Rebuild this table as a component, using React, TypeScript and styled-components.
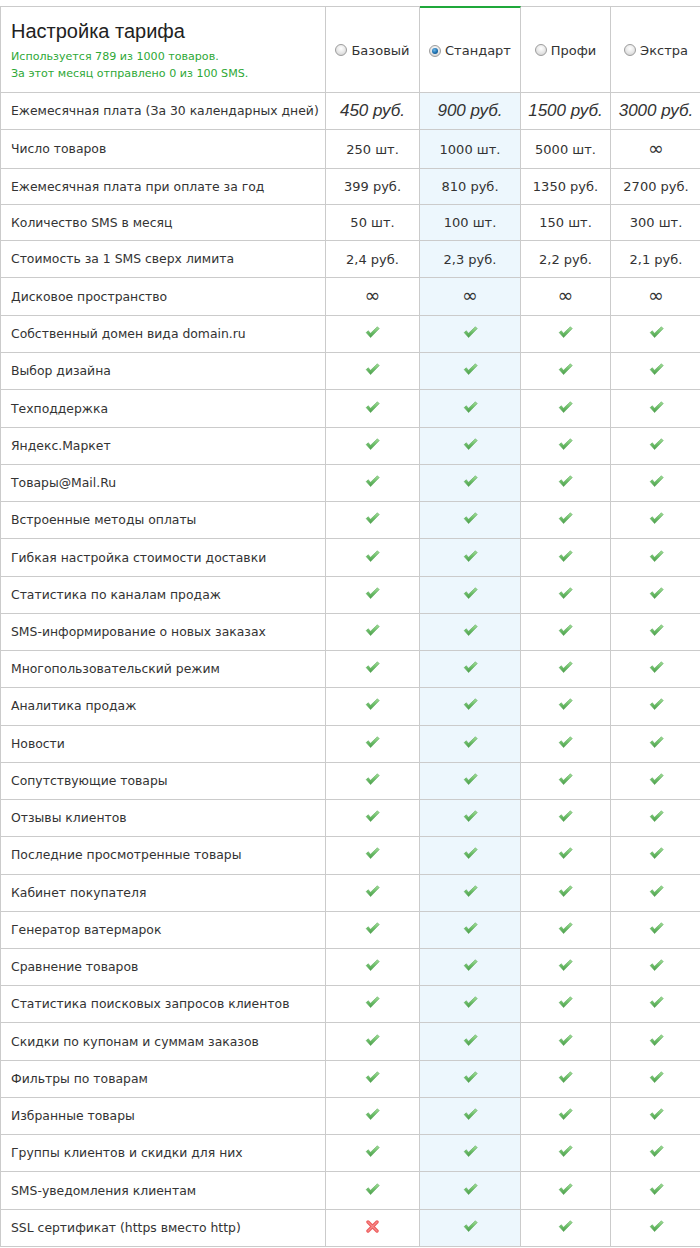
import React from "react";
import styled, { createGlobalStyle } from "styled-components";

const Global = createGlobalStyle`
  html, body { margin: 0; padding: 0; background: #fff; overflow: hidden; }
  body { font-family: "DejaVu Sans", Verdana, sans-serif; color: #333; }
`;

const COLS = "325px 94px 101px 90px 91px";

const Table = styled.div`
  margin-top: 6px;
  width: 701px;
  border-top: 1px solid #cbcbcb;
  border-left: 1px solid #cbcbcb;
  box-sizing: border-box;
`;

const Row = styled.div<{ $h: number }>`
  display: grid;
  grid-template-columns: ${COLS};
  height: ${(p) => p.$h}px;
`;

const Cell = styled.div<{ $hl?: boolean; $top?: boolean }>`
  box-sizing: border-box;
  border-right: 1px solid #cbcbcb;
  border-bottom: 1px solid #cbcbcb;
  background: ${(p) => (p.$hl ? "#edf7fd" : "#fff")};
  display: flex;
  align-items: center;
  justify-content: center;
  font-size: 13px;
  color: #333;
  ${(p) => (p.$top ? "border-top: 2px solid #1fa83a; margin-top: -1px;" : "")}
`;

const LabelCell = styled(Cell)`
  justify-content: flex-start;
  padding-left: 10px;
  padding-bottom: 1px;
  font-size: 12.4px;
  white-space: nowrap;
`;

const TitleCell = styled(Cell)`
  flex-direction: column;
  align-items: flex-start;
  justify-content: flex-start;
  padding: 12px 10px 0;
`;

const Title = styled.div`
  font-family: "Liberation Sans", Arial, sans-serif;
  font-size: 20px;
  color: #222;
  line-height: 24px;
`;

const Usage = styled.div`
  margin-top: 5px;
  font-size: 11.1px;
  line-height: 17px;
  color: #2ea836;
`;

const PlanLabel = styled.label`
  display: flex;
  align-items: center;
  gap: 4px;
  font-size: 13px;
  color: #333;
  margin-top: 1px;
`;

const Radio = styled.span<{ $on?: boolean }>`
  width: 12px;
  height: 12px;
  border-radius: 50%;
  box-sizing: border-box;
  border: 1px solid #9d9d9d;
  background: radial-gradient(circle at 50% 35%, #ffffff 0%, #e6e6e6 55%, #c9c9c9 100%);
  display: inline-flex;
  align-items: center;
  justify-content: center;
  &::after {
    content: "";
    display: ${(p) => (p.$on ? "block" : "none")};
    width: 6px;
    height: 6px;
    border-radius: 50%;
    background: radial-gradient(circle at 40% 35%, #6fb8e8 0%, #1c6fae 55%, #0d3f6e 100%);
  }
`;

const Price = styled.span`
  font-family: "Liberation Sans", Arial, sans-serif;
  font-style: italic;
  font-size: 17px;
  color: #333;
`;

const Inf = styled.span`
  font-size: 19px;
  line-height: 1;
  color: #333;
  margin-top: -2px;
`;

const IconWrap = styled.span`
  display: inline-flex;
  margin-top: -3px;
`;

const Check = () => (
  <IconWrap>
    <svg width="15" height="13" viewBox="0 0 15 13">
      <defs>
        <linearGradient id="cg" x1="0" y1="0" x2="0" y2="1">
          <stop offset="0" stopColor="#a7e09c" />
          <stop offset="0.5" stopColor="#6cbf68" />
          <stop offset="1" stopColor="#4c9c4c" />
        </linearGradient>
      </defs>
      <path
        d="M1.2 6.6 L3.2 4.8 L5.6 7.2 L12.4 0.8 L14.2 2.6 L5.6 11.6 Z"
        fill="url(#cg)"
        stroke="#5aa95a"
        strokeWidth="0.6"
        strokeLinejoin="round"
      />
    </svg>
  </IconWrap>
);

const Cross = () => (
  <IconWrap>
    <svg width="13" height="13" viewBox="0 0 13 13">
      <path
        d="M2 2 L11 11 M11 2 L2 11"
        stroke="#ec5b5b"
        strokeWidth="3.4"
        strokeLinecap="round"
      />
      <path d="M2 2 L11 11 M11 2 L2 11" stroke="#f88a8a" strokeWidth="1.2" strokeLinecap="round" />
    </svg>
  </IconWrap>
);

type V = string | "inf" | "yes" | "no";

const plans = ["Базовый", "Стандарт", "Профи", "Экстра"];

const valueRows: { label: string; v: V[]; h: number }[] = [
  { label: "Число товаров", v: ["250 шт.", "1000 шт.", "5000 шт.", "inf"], h: 39 },
  { label: "Ежемесячная плата при оплате за год", v: ["399 руб.", "810 руб.", "1350 руб.", "2700 руб."], h: 36 },
  { label: "Количество SMS в месяц", v: ["50 шт.", "100 шт.", "150 шт.", "300 шт."], h: 36 },
  { label: "Стоимость за 1 SMS сверх лимита", v: ["2,4 руб.", "2,3 руб.", "2,2 руб.", "2,1 руб."], h: 37 },
  { label: "Дисковое пространство", v: ["inf", "inf", "inf", "inf"], h: 38 },
];

const features = [
  "Собственный домен вида domain.ru",
  "Выбор дизайна",
  "Техподдержка",
  "Яндекс.Маркет",
  "Товары@Mail.Ru",
  "Встроенные методы оплаты",
  "Гибкая настройка стоимости доставки",
  "Статистика по каналам продаж",
  "SMS-информирование о новых заказах",
  "Многопользовательский режим",
  "Аналитика продаж",
  "Новости",
  "Сопутствующие товары",
  "Отзывы клиентов",
  "Последние просмотренные товары",
  "Кабинет покупателя",
  "Генератор ватермарок",
  "Сравнение товаров",
  "Статистика поисковых запросов клиентов",
  "Скидки по купонам и суммам заказов",
  "Фильтры по товарам",
  "Избранные товары",
  "Группы клиентов и скидки для них",
  "SMS-уведомления клиентам",
  "SSL сертификат (https вместо http)",
];

const renderValue = (v: V) => {
  if (v === "inf") return <Inf>∞</Inf>;
  if (v === "yes") return <Check />;
  if (v === "no") return <Cross />;
  return v;
};

export default function App() {
  const selected = 1;
  return (
    <>
      <Global />
      <Table>
        <Row $h={86}>
          <TitleCell>
            <Title>Настройка тарифа</Title>
            <Usage>
              Используется 789 из 1000 товаров.
              <br />
              За этот месяц отправлено 0 из 100 SMS.
            </Usage>
          </TitleCell>
          {plans.map((p, i) => (
            <Cell key={p} $top={i === selected}>
              <PlanLabel>
                <Radio $on={i === selected} />
                {p}
              </PlanLabel>
            </Cell>
          ))}
        </Row>
        <Row $h={37}>
          <LabelCell>Ежемесячная плата (За 30 календарных дней)</LabelCell>
          {["450 руб.", "900 руб.", "1500 руб.", "3000 руб."].map((v, i) => (
            <Cell key={v} $hl={i === selected}>
              <Price>{v}</Price>
            </Cell>
          ))}
        </Row>
        {valueRows.map((r) => (
          <Row key={r.label} $h={r.h}>
            <LabelCell>{r.label}</LabelCell>
            {r.v.map((v, i) => (
              <Cell key={i} $hl={i === selected}>
                {renderValue(v)}
              </Cell>
            ))}
          </Row>
        ))}
        {features.map((f, idx) => {
          const vals: V[] =
            idx === features.length - 1 ? ["no", "yes", "yes", "yes"] : ["yes", "yes", "yes", "yes"];
          return (
            <Row key={f} $h={37.24}>
              <LabelCell>{f}</LabelCell>
              {vals.map((v, i) => (
                <Cell key={i} $hl={i === selected}>
                  {renderValue(v)}
                </Cell>
              ))}
            </Row>
          );
        })}
      </Table>
    </>
  );
}
